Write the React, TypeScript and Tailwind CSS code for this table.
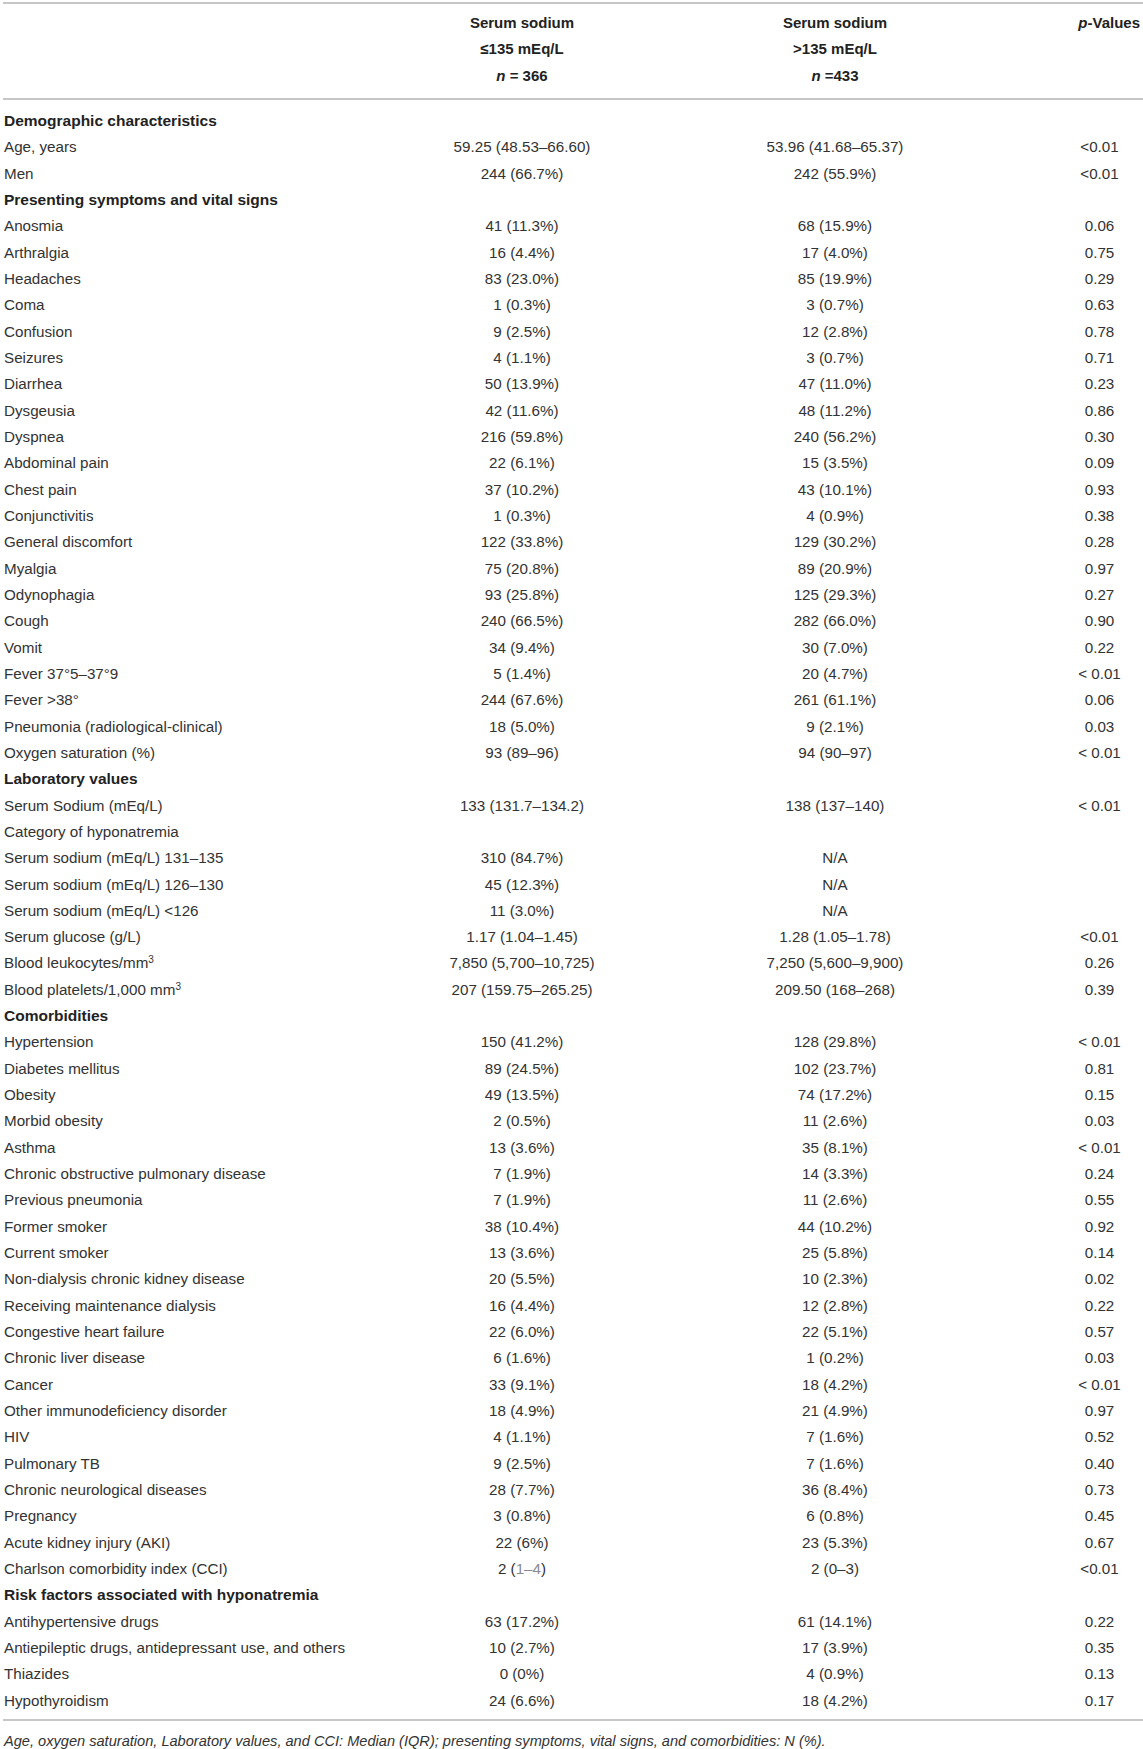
import React from "react";

type Row = {
    label: React.ReactNode;
    a?: React.ReactNode;
    b?: React.ReactNode;
    p?: string;
    section?: boolean;
};

const mm3 = (
    <>
        mm<sup className="text-[10px]">3</sup>
    </>
);

const rows: Row[] = [
    { label: "Demographic characteristics", section: true },
    { label: "Age, years", a: "59.25 (48.53–66.60)", b: "53.96 (41.68–65.37)", p: "<0.01" },
    { label: "Men", a: "244 (66.7%)", b: "242 (55.9%)", p: "<0.01" },
    { label: "Presenting symptoms and vital signs", section: true },
    { label: "Anosmia", a: "41 (11.3%)", b: "68 (15.9%)", p: "0.06" },
    { label: "Arthralgia", a: "16 (4.4%)", b: "17 (4.0%)", p: "0.75" },
    { label: "Headaches", a: "83 (23.0%)", b: "85 (19.9%)", p: "0.29" },
    { label: "Coma", a: "1 (0.3%)", b: "3 (0.7%)", p: "0.63" },
    { label: "Confusion", a: "9 (2.5%)", b: "12 (2.8%)", p: "0.78" },
    { label: "Seizures", a: "4 (1.1%)", b: "3 (0.7%)", p: "0.71" },
    { label: "Diarrhea", a: "50 (13.9%)", b: "47 (11.0%)", p: "0.23" },
    { label: "Dysgeusia", a: "42 (11.6%)", b: "48 (11.2%)", p: "0.86" },
    { label: "Dyspnea", a: "216 (59.8%)", b: "240 (56.2%)", p: "0.30" },
    { label: "Abdominal pain", a: "22 (6.1%)", b: "15 (3.5%)", p: "0.09" },
    { label: "Chest pain", a: "37 (10.2%)", b: "43 (10.1%)", p: "0.93" },
    { label: "Conjunctivitis", a: "1 (0.3%)", b: "4 (0.9%)", p: "0.38" },
    { label: "General discomfort", a: "122 (33.8%)", b: "129 (30.2%)", p: "0.28" },
    { label: "Myalgia", a: "75 (20.8%)", b: "89 (20.9%)", p: "0.97" },
    { label: "Odynophagia", a: "93 (25.8%)", b: "125 (29.3%)", p: "0.27" },
    { label: "Cough", a: "240 (66.5%)", b: "282 (66.0%)", p: "0.90" },
    { label: "Vomit", a: "34 (9.4%)", b: "30 (7.0%)", p: "0.22" },
    { label: "Fever 37°5–37°9", a: "5 (1.4%)", b: "20 (4.7%)", p: "< 0.01" },
    { label: "Fever >38°", a: "244 (67.6%)", b: "261 (61.1%)", p: "0.06" },
    { label: "Pneumonia (radiological-clinical)", a: "18 (5.0%)", b: "9 (2.1%)", p: "0.03" },
    { label: "Oxygen saturation (%)", a: "93 (89–96)", b: "94 (90–97)", p: "< 0.01" },
    { label: "Laboratory values", section: true },
    { label: "Serum Sodium (mEq/L)", a: "133 (131.7–134.2)", b: "138 (137–140)", p: "< 0.01" },
    { label: "Category of hyponatremia" },
    { label: "Serum sodium (mEq/L) 131–135", a: "310 (84.7%)", b: "N/A" },
    { label: "Serum sodium (mEq/L) 126–130", a: "45 (12.3%)", b: "N/A" },
    { label: "Serum sodium (mEq/L) <126", a: "11 (3.0%)", b: "N/A" },
    { label: "Serum glucose (g/L)", a: "1.17 (1.04–1.45)", b: "1.28 (1.05–1.78)", p: "<0.01" },
    { label: <>Blood leukocytes/{mm3}</>, a: "7,850 (5,700–10,725)", b: "7,250 (5,600–9,900)", p: "0.26" },
    { label: <>Blood platelets/1,000 {mm3}</>, a: "207 (159.75–265.25)", b: "209.50 (168–268)", p: "0.39" },
    { label: "Comorbidities", section: true },
    { label: "Hypertension", a: "150 (41.2%)", b: "128 (29.8%)", p: "< 0.01" },
    { label: "Diabetes mellitus", a: "89 (24.5%)", b: "102 (23.7%)", p: "0.81" },
    { label: "Obesity", a: "49 (13.5%)", b: "74 (17.2%)", p: "0.15" },
    { label: "Morbid obesity", a: "2 (0.5%)", b: "11 (2.6%)", p: "0.03" },
    { label: "Asthma", a: "13 (3.6%)", b: "35 (8.1%)", p: "< 0.01" },
    { label: "Chronic obstructive pulmonary disease", a: "7 (1.9%)", b: "14 (3.3%)", p: "0.24" },
    { label: "Previous pneumonia", a: "7 (1.9%)", b: "11 (2.6%)", p: "0.55" },
    { label: "Former smoker", a: "38 (10.4%)", b: "44 (10.2%)", p: "0.92" },
    { label: "Current smoker", a: "13 (3.6%)", b: "25 (5.8%)", p: "0.14" },
    { label: "Non-dialysis chronic kidney disease", a: "20 (5.5%)", b: "10 (2.3%)", p: "0.02" },
    { label: "Receiving maintenance dialysis", a: "16 (4.4%)", b: "12 (2.8%)", p: "0.22" },
    { label: "Congestive heart failure", a: "22 (6.0%)", b: "22 (5.1%)", p: "0.57" },
    { label: "Chronic liver disease", a: "6 (1.6%)", b: "1 (0.2%)", p: "0.03" },
    { label: "Cancer", a: "33 (9.1%)", b: "18 (4.2%)", p: "< 0.01" },
    { label: "Other immunodeficiency disorder", a: "18 (4.9%)", b: "21 (4.9%)", p: "0.97" },
    { label: "HIV", a: "4 (1.1%)", b: "7 (1.6%)", p: "0.52" },
    { label: "Pulmonary TB", a: "9 (2.5%)", b: "7 (1.6%)", p: "0.40" },
    { label: "Chronic neurological diseases", a: "28 (7.7%)", b: "36 (8.4%)", p: "0.73" },
    { label: "Pregnancy", a: "3 (0.8%)", b: "6 (0.8%)", p: "0.45" },
    { label: "Acute kidney injury (AKI)", a: "22 (6%)", b: "23 (5.3%)", p: "0.67" },
    {
        label: "Charlson comorbidity index (CCI)",
        a: <>2 (<span className="text-[#8a8a8a]">1–4</span>)</>,
        b: "2 (0–3)",
        p: "<0.01",
    },
    { label: "Risk factors associated with hyponatremia", section: true },
    { label: "Antihypertensive drugs", a: "63 (17.2%)", b: "61 (14.1%)", p: "0.22" },
    { label: "Antiepileptic drugs, antidepressant use, and others", a: "10 (2.7%)", b: "17 (3.9%)", p: "0.35" },
    { label: "Thiazides", a: "0 (0%)", b: "4 (0.9%)", p: "0.13" },
    { label: "Hypothyroidism", a: "24 (6.6%)", b: "18 (4.2%)", p: "0.17" },
];

const grid = "grid grid-cols-[380px_276px_350px_1fr]";

export default function App() {
    return (
        <div className="w-[1143px] bg-white pt-[2px] text-[15.2px] text-[#333] font-['Liberation_Sans',Arial,sans-serif]">
            {/* header */}
            <div className="ml-[3px] border-t-2 border-[#c6c6c6]" />
            <div className={`${grid} pl-[4px] pt-[6px] pb-[9px] text-[15px] font-bold text-[#222] leading-[26.33px]`}>
                <div />
                <div className="text-center">
                    <div>Serum sodium</div>
                    <div>≤135 mEq/L</div>
                    <div>
                        <i>n</i> = 366
                    </div>
                </div>
                <div className="text-center">
                    <div>Serum sodium</div>
                    <div>&gt;135 mEq/L</div>
                    <div>
                        <i>n</i> =433
                    </div>
                </div>
                <div className="text-right pr-[3px]">
                    <i>p</i>-Values
                </div>
            </div>
            <div className="ml-[3px] border-t-2 border-[#c6c6c6]" />

            {/* body */}
            <div className="pt-[8px] pb-[5px]">
                {rows.map((r, i) => (
                    <div key={i} className={`${grid} pl-[4px] h-[26.33px] leading-[26.33px] whitespace-nowrap`}>
                        <div className={r.section ? "font-bold text-[15.5px] text-[#222]" : ""}>{r.label}</div>
                        <div className="text-center">{r.a}</div>
                        <div className="text-center">{r.b}</div>
                        <div className="text-center pl-[46px]">{r.p}</div>
                    </div>
                ))}
            </div>
            <div className="ml-[3px] border-t-2 border-[#c6c6c6]" />

            {/* footnote */}
            <div className="pl-[4px] pt-[7px] italic text-[14.6px] leading-[26px]">
                Age, oxygen saturation, Laboratory values, and CCI: Median (IQR); presenting symptoms, vital signs, and comorbidities: N (%).
            </div>
        </div>
    );
}
